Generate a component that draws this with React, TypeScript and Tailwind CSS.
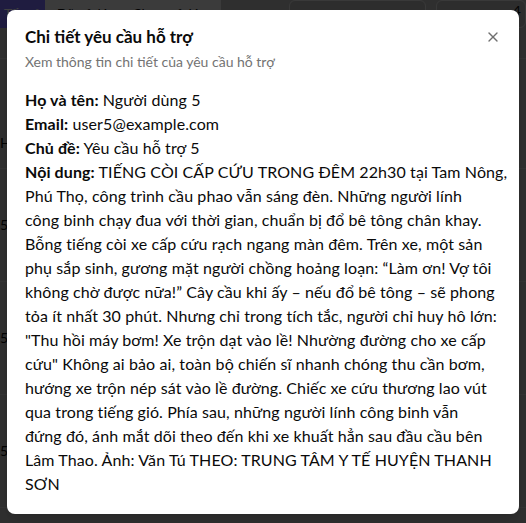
import { X } from "lucide-react"

// line breaks follow the reference layout
const contentLines = [
  "TIẾNG CÒI CẤP CỨU TRONG ĐÊM 22h30 tại Tam Nông,",
  "Phú Thọ, công trình cầu phao vẫn sáng đèn. Những người lính",
  "công binh chạy đua với thời gian, chuẩn bị đổ bê tông chân khay.",
  "Bỗng tiếng còi xe cấp cứu rạch ngang màn đêm. Trên xe, một sản",
  "phụ sắp sinh, gương mặt người chồng hoảng loạn: “Làm ơn! Vợ tôi",
  "không chờ được nữa!” Cây cầu khi ấy – nếu đổ bê tông – sẽ phong",
  "tỏa ít nhất 30 phút. Nhưng chỉ trong tích tắc, người chỉ huy hô lớn:",
  "\"Thu hồi máy bơm! Xe trộn dạt vào lề! Nhường đường cho xe cấp",
  "cứu\" Không ai bảo ai, toàn bộ chiến sĩ nhanh chóng thu cần bơm,",
  "hướng xe trộn nép sát vào lề đường. Chiếc xe cứu thương lao vút",
  "qua trong tiếng gió. Phía sau, những người lính công binh vẫn",
  "đứng đó, ánh mắt dõi theo đến khi xe khuất hẳn sau đầu cầu bên",
  "Lâm Thao. Ảnh: Văn Tú THEO: TRUNG TÂM Y TẾ HUYỆN THANH",
  "SƠN",
]

const rows = ["5", "5", "5"]

export default function App() {
  return (
    <div className="relative h-[523px] overflow-hidden bg-[#bcbcbc] font-['Lato',sans-serif] tracking-[0.1px] text-[#0a0a0a]">
      {/* Page behind the dialog */}
      <div className="flex items-center gap-[68px] h-7">
        <div className="flex items-center h-7 w-[230px] bg-[#ececec] text-sm">
          <span className="h-7 px-1 flex items-center bg-[#7d72ff] text-white">Tất cả</span>
          <span className="px-3">Đã xử lý</span>
          <span className="px-3">Chưa xử lý</span>
        </div>
        <div className="flex gap-[10px]">
          <div className="h-7 w-[137px] rounded-md border border-[#e2e2e2] bg-[#b4b4b4]" />
          <div className="h-7 w-[90px] rounded-md border border-[#e2e2e2] bg-[#b4b4b4] text-sm text-right pr-1">4</div>
        </div>
      </div>
      <div className="mt-[30px] border-t border-[#d0d0d0]">
        <div className="h-[110px] border-b border-[#d0d0d0] pt-[74px] text-sm">HI</div>
        {rows.map((r, i) => (
          <div key={i} className="h-[113px] border-b border-[#d0d0d0] flex items-center text-sm">
            {r}
          </div>
        ))}
      </div>

      {/* Overlay + dialog */}
      <div className="absolute inset-0 bg-black/75 flex items-center justify-center">
        <div className="relative w-[512px] bg-white rounded-lg pl-[18px] pr-[8px] py-[18px] flex flex-col gap-4 shadow-lg">
          <div className="flex flex-col gap-1.5">
            <h2 className="text-[17px] font-bold leading-[18px] tracking-normal text-[#0a0a0a]">Chi tiết yêu cầu hỗ trợ</h2>
            <p className="text-sm tracking-normal text-[#737373]">Xem thông tin chi tiết của yêu cầu hỗ trợ</p>
          </div>
          <div className="text-base leading-6">
            <p>
              <b>Họ và tên:</b> Người dùng 5
            </p>
            <p>
              <b>Email:</b> user5@example.com
            </p>
            <p>
              <b>Chủ đề:</b> Yêu cầu hỗ trợ 5
            </p>
            <p>
              <b>Nội dung:</b>{" "}
              {contentLines.map((line, i) => (
                <span key={i}>
                  {line}
                  {i < contentLines.length - 1 && <br />}
                </span>
              ))}
            </p>
          </div>
          <button className="absolute right-[18px] top-[19px] text-[#333] opacity-70">
            <X className="w-4 h-4" />
          </button>
        </div>
      </div>
    </div>
  )
}
